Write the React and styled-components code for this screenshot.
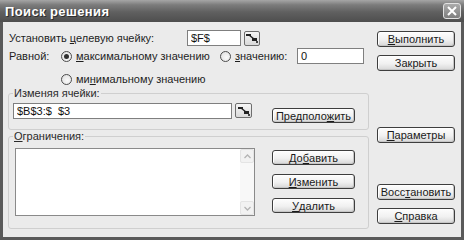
import styled, { createGlobalStyle } from 'styled-components';

const GlobalStyle = createGlobalStyle`
  html, body {
    margin: 0;
    padding: 0;
    background: #ebebeb;
  }

  body {
    font-family: "Liberation Sans", Arial, sans-serif;
    font-size: 11px;
    color: #1e1e1e;
  }
`;

const Window = styled.div`
  width: 464px;
  height: 240px;
  box-sizing: border-box;
  display: flex;
  flex-direction: column;
  background: #ebebeb;
  overflow: hidden;
`;

const TitleBar = styled.div`
  height: 22px;
  flex: none;
  display: flex;
  align-items: center;
  justify-content: space-between;
  padding: 0 3px 0 5px;
  background: linear-gradient(#a6a6a6 0%, #7c7c7c 22%, #606060 55%, #4e4e4e 100%);
`;

const Title = styled.span`
  color: #fff;
  font-weight: bold;
  font-size: 13px;
  letter-spacing: 0.4px;
  text-shadow: 1px 1px 0 #2e2e2e;
`;

const CloseButton = styled.div`
  width: 18px;
  height: 16px;
  box-sizing: border-box;
  border: 1px solid #e2e2e2;
  border-radius: 3px;
  background: linear-gradient(#ababab, #7e7e7e);
  display: flex;
  align-items: center;
  justify-content: center;
`;

const Body = styled.div`
  flex: 1;
  display: flex;
  gap: 8px;
  padding: 8px 6px 0 5px;
  border: 3px solid #5a5a5a;
  border-top: none;
`;

const Main = styled.div`
  width: 361px;
  display: flex;
  flex-direction: column;
`;

const Side = styled.div`
  width: 78px;
  display: flex;
  flex-direction: column;
`;

const Row = styled.div`
  display: flex;
  align-items: center;
  height: 16px;
  margin-top: ${p => p.$top || 0}px;
  padding-left: ${p => p.$indent || 0}px;
`;

const Label = styled.span`
  width: ${p => p.$w}px;
  flex: none;
  white-space: nowrap;
  padding-left: ${p => p.$pad || 0}px;
  box-sizing: border-box;
`;

const Key = styled.u`
  text-decoration: underline;
  text-underline-offset: 1px;
`;

const Field = styled.input`
  box-sizing: border-box;
  width: ${p => p.$w}px;
  height: 16px;
  margin: 0;
  padding: 0 3px;
  border: 1px solid #7f7f7f;
  background: #fff;
  font: inherit;
  font-size: 11px;
  color: #111;
  outline: none;
  white-space: pre;
`;

const RefButton = styled.div`
  box-sizing: border-box;
  width: ${p => p.$w || 16}px;
  height: 15px;
  margin-left: 3px;
  border: 1px solid #6e6e6e;
  border-radius: 2px;
  background: linear-gradient(#f6f6f6, #d9d9d9);
  display: flex;
  align-items: center;
  justify-content: center;
`;

const RadioOption = styled.label`
  width: ${p => p.$w}px;
  flex: none;
  display: flex;
  align-items: center;
  gap: 4px;
  white-space: nowrap;
`;

const RadioCircle = styled.span`
  width: 11px;
  height: 11px;
  box-sizing: border-box;
  border-radius: 50%;
  border: 1px solid #4c4c4c;
  background: radial-gradient(circle at 60% 60%, #fafafa, #dcdcdc);
  display: flex;
  align-items: center;
  justify-content: center;

  &::after {
    content: '';
    width: 5px;
    height: 5px;
    border-radius: 50%;
    background: ${p => (p.$checked ? '#303030' : 'transparent')};
  }
`;

const Button = styled.button`
  box-sizing: border-box;
  width: ${p => p.$w || 78}px;
  height: ${p => p.$h || 16}px;
  margin: ${p => p.$top || 0}px 0 0 ${p => p.$left || 0}px;
  padding: 0;
  flex: none;
  font: inherit;
  font-size: 11px;
  color: #1a1a1a;
  border: 1px solid #3e3e3e;
  border-radius: 3px;
  background: linear-gradient(#fdfdfd, #f1f1f1 55%, #d6d6d6);
  box-shadow: inset -1px -1px 0 #c6c6c6, inset 1px 1px 0 #fff;
  display: flex;
  align-items: center;
  justify-content: center;
`;

const Group = styled.fieldset`
  box-sizing: border-box;
  width: 361px;
  margin: ${p => p.$top || 0}px 0 0;
  padding: ${p => p.$pad};
  border: 1px solid #cfcfcf;
  border-radius: 3px;
  min-width: 0;
`;

const Legend = styled.legend`
  padding: 0 1px;
  margin-left: 0;
  height: 12px;
  line-height: 12px;
  color: #2a2a2a;
`;

const GroupRow = styled.div`
  display: flex;
  align-items: flex-start;
`;

const ListBox = styled.div`
  box-sizing: border-box;
  width: 240px;
  height: 68px;
  margin-left: 2px;
  border: 1px solid #8a8a8a;
  background: #fff;
  display: flex;
  justify-content: flex-end;
`;

const ScrollBar = styled.div`
  width: 14px;
  display: flex;
  flex-direction: column;
  justify-content: space-between;
  background: #f8f8f8;
`;

const ScrollArrow = styled.div`
  box-sizing: border-box;
  height: 14px;
  border: 1px solid #e4e4e4;
  border-radius: 2px;
  background: #f2f2f2;
  display: flex;
  align-items: center;
  justify-content: center;
`;

const ButtonStack = styled.div`
  display: flex;
  flex-direction: column;
  gap: 9px;
  margin: 2px 0 0 17px;
`;

function RefIcon() {
  return (
    <svg width="12" height="10" viewBox="0 0 12 10">
      <rect x="0" y="1" width="5" height="2" fill="#222" />
      <path d="M3 2 L8 6" stroke="#222" strokeWidth="1.4" />
      <rect x="6" y="5" width="5" height="3" fill="#222" />
      <rect x="10" y="8" width="2" height="2" fill="#444" />
    </svg>
  );
}

function Chevron({ down }) {
  return (
    <svg width="7" height="5" viewBox="0 0 7 5">
      <path
        d={down ? 'M0.5 1 L3.5 4 L6.5 1' : 'M0.5 4 L3.5 1 L6.5 4'}
        fill="none"
        stroke="#b4b4b4"
        strokeWidth="1.3"
      />
    </svg>
  );
}

function Radio({ checked, width, children }) {
  return (
    <RadioOption $w={width}>
      <RadioCircle $checked={checked} />
      <span>{children}</span>
    </RadioOption>
  );
}

export default function App() {
  return (
    <>
      <GlobalStyle />
      <Window>
        <TitleBar>
          <Title>Поиск решения</Title>
          <CloseButton>
            <svg width="10" height="10" viewBox="0 0 10 10">
              <path d="M1 1 L9 9 M9 1 L1 9" stroke="#fff" strokeWidth="2" />
            </svg>
          </CloseButton>
        </TitleBar>
        <Body>
          <Main>
            <Row>
              <Label $w={179} $pad={1}>
                Установить <Key>ц</Key>елевую ячейку:
              </Label>
              <Field $w={54} defaultValue="$F$" readOnly />
              <RefButton>
                <RefIcon />
              </RefButton>
            </Row>
            <Row $top={2}>
              <Label $w={53} $pad={1}>Равной:</Label>
              <Radio checked width={159}>
                <Key>м</Key>аксимальному значению
              </Radio>
              <Radio width={77}>
                <Key>з</Key>начению:
              </Radio>
              <Field $w={67} defaultValue="0" readOnly />
            </Row>
            <Row $top={7} $indent={53}>
              <Radio width={200}>
                ми<Key>н</Key>имальному значению
              </Radio>
            </Row>
            <Group $pad="4px 8px 6px 4px">
              <Legend>Изменяя ячейки:</Legend>
              <GroupRow>
                <Field $w={219} defaultValue="$B$3:$  $3" readOnly />
                <RefButton $w={17}>
                  <RefIcon />
                </RefButton>
                <Button $w={83} $h={15} $top={5} $left={20}>
                  Предполо<Key>ж</Key>ить
                </Button>
              </GroupRow>
            </Group>
            <Group $pad="6px 8px 12px 4px">
              <Legend>
                <Key>О</Key>граничения:
              </Legend>
              <GroupRow>
                <ListBox>
                  <ScrollBar>
                    <ScrollArrow>
                      <Chevron />
                    </ScrollArrow>
                    <ScrollArrow>
                      <Chevron down />
                    </ScrollArrow>
                  </ScrollBar>
                </ListBox>
                <ButtonStack>
                  <Button $w={83} $h={15}>
                    До<Key>б</Key>авить
                  </Button>
                  <Button $w={83} $h={15}>
                    <Key>И</Key>зменить
                  </Button>
                  <Button $w={83} $h={15}>
                    <Key>У</Key>далить
                  </Button>
                </ButtonStack>
              </GroupRow>
            </Group>
          </Main>
          <Side>
            <Button $top={1}>
              <Key>В</Key>ыполнить
            </Button>
            <Button $top={8}>Закрыть</Button>
            <Button $top={56}>
              <Key>П</Key>араметры
            </Button>
            <Button $top={41}>
              Восс<Key>т</Key>ановить
            </Button>
            <Button $top={8}>
              <Key>С</Key>правка
            </Button>
          </Side>
        </Body>
      </Window>
    </>
  );
}
